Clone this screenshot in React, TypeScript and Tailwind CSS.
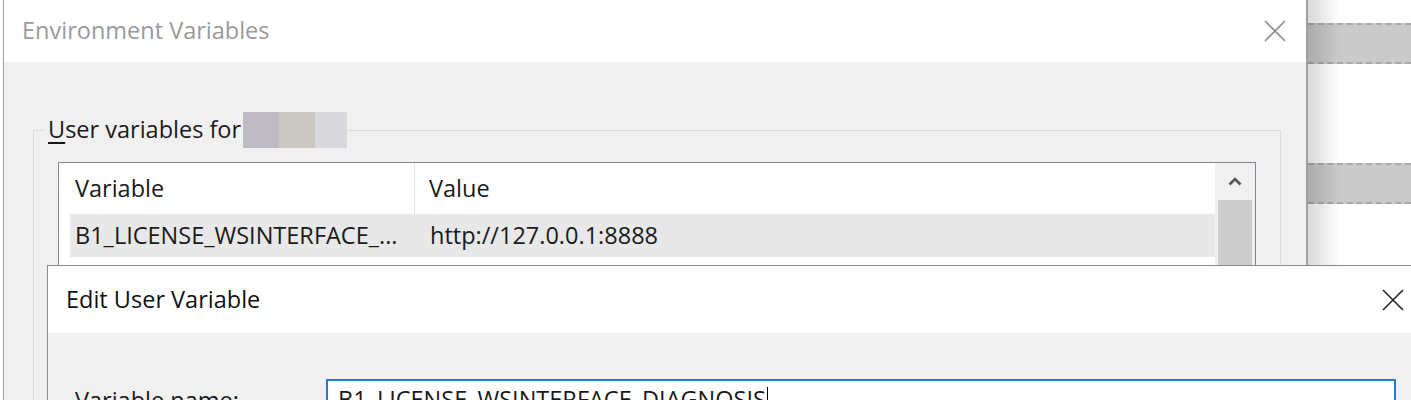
import React from 'react'

const font = { fontFamily: '"Open Sans", "Noto Sans", sans-serif' }

function CloseIcon({ className }: { className: string }) {
  return (
    <svg viewBox="0 0 22 22" className={className} fill="none" stroke="currentColor" strokeWidth="1.6">
      <path d="M1 1 L21 21 M21 1 L1 21" />
    </svg>
  )
}

function ListView() {
  return (
    <div className="flex h-[220px] border border-[#828790] bg-white">
      <div className="flex flex-1 flex-col">
        {/* header */}
        <div className="flex h-[51px] shrink-0 items-center bg-white">
          <div className="flex h-full w-[356px] items-center border-r border-[#e5e5e5] pl-[16px]">Variable</div>
          <div className="pl-[14px]">Value</div>
        </div>
        {/* selected row */}
        <div className="flex h-[43px] shrink-0 items-center bg-white pl-[11px]">
          <div className="flex h-full flex-1 items-center bg-[#e8e8e8]">
            <div className="w-[346px] whitespace-nowrap pl-[5px]">B1_LICENSE_WSINTERFACE_...</div>
            <div className="pl-[14px]">http://127.0.0.1:8888</div>
          </div>
        </div>
      </div>
      {/* scrollbar */}
      <div className="flex w-[40px] flex-col bg-[#f0f0f0] px-[3px]">
        <div className="flex h-[37px] shrink-0 items-center justify-center">
          <svg viewBox="0 0 14 9" className="h-[9px] w-[14px]" fill="none" stroke="#555" strokeWidth="2.6">
            <path d="M1.5 7.5 L7 2 L12.5 7.5" />
          </svg>
        </div>
        <div className="flex-1 bg-[#cdcdcd]" />
      </div>
    </div>
  )
}

export default function App() {
  return (
    <div className="relative flex h-[400px] w-[1411px] overflow-hidden bg-white text-[23.5px] text-[#1a1a1a]" style={font}>
      <div className="w-[3px] shrink-0 bg-white" />

      {/* Environment Variables window */}
      <div className="flex h-full w-[1305px] shrink-0 flex-col border-l border-r-2 border-[#a0a0a0]">
        <div className="flex h-[62px] shrink-0 items-center justify-between bg-white pl-[18px] pr-[20px]">
          <span className="text-[#9a9a9a]">Environment Variables</span>
          <CloseIcon className="h-[22px] w-[22px] text-[#8e8e8e]" />
        </div>
        <div className="flex-1 bg-[#f0f0f0] pl-[29px] pt-[50px]">
          <fieldset className="w-[1248px] border border-[#dcdcdc] px-[24px] pb-[20px]">
            <legend className="-ml-[14px] flex h-[36px] items-center pl-[4px] pr-0">
              <span>
                <u className="underline-offset-4">U</u>ser variables for
              </span>
              <span className="ml-[2px] flex h-[36px]">
                <span className="w-[36px] bg-[#bebbc2]" />
                <span className="w-[36px] bg-[#cbc8c1]" />
                <span className="w-[32px] bg-[#d9d8dd]" />
              </span>
            </legend>
            <div className="pt-[14px]">
              <ListView />
            </div>
          </fieldset>
        </div>
      </div>

      {/* window behind, on the right */}
      <div className="relative flex-1 bg-white pt-[23px]">
        <div className="h-[41px] border-y-2 border-dashed border-[#a9a9a9] bg-[#cacaca]" />
        <div className="mt-[99px] h-[41px] border-y-2 border-dashed border-[#a9a9a9] bg-[#cacaca]" />
        <div className="absolute inset-y-0 left-0 w-[32px] bg-linear-to-r from-black/15 to-transparent" />
      </div>

      {/* Edit User Variable dialog */}
      <div className="absolute left-[47px] right-0 top-[265px] flex h-[200px] flex-col border-l border-t border-[#8a8a8a]">
        <div className="flex h-[67px] shrink-0 items-center justify-between bg-white pl-[18px] pr-[7px]">
          <span className="text-[#111]">Edit User Variable</span>
          <CloseIcon className="h-[22px] w-[22px] text-[#222]" />
        </div>
        <div className="flex flex-1 items-start bg-[#f0f0f0] pt-[46px]">
          <div className="flex h-[42px] w-[278px] items-center pl-[27px] pt-[2px]">Variable name:</div>
          <div className="flex h-[42px] w-[1070px] items-center border-2 border-[#1a7fd4] bg-white pl-[10px]">
            <span>B1_LICENSE_WSINTERFACE_DIAGNOSIS</span>
            <span className="ml-[1px] h-[26px] w-[1px] bg-black" />
          </div>
        </div>
      </div>
    </div>
  )
}
